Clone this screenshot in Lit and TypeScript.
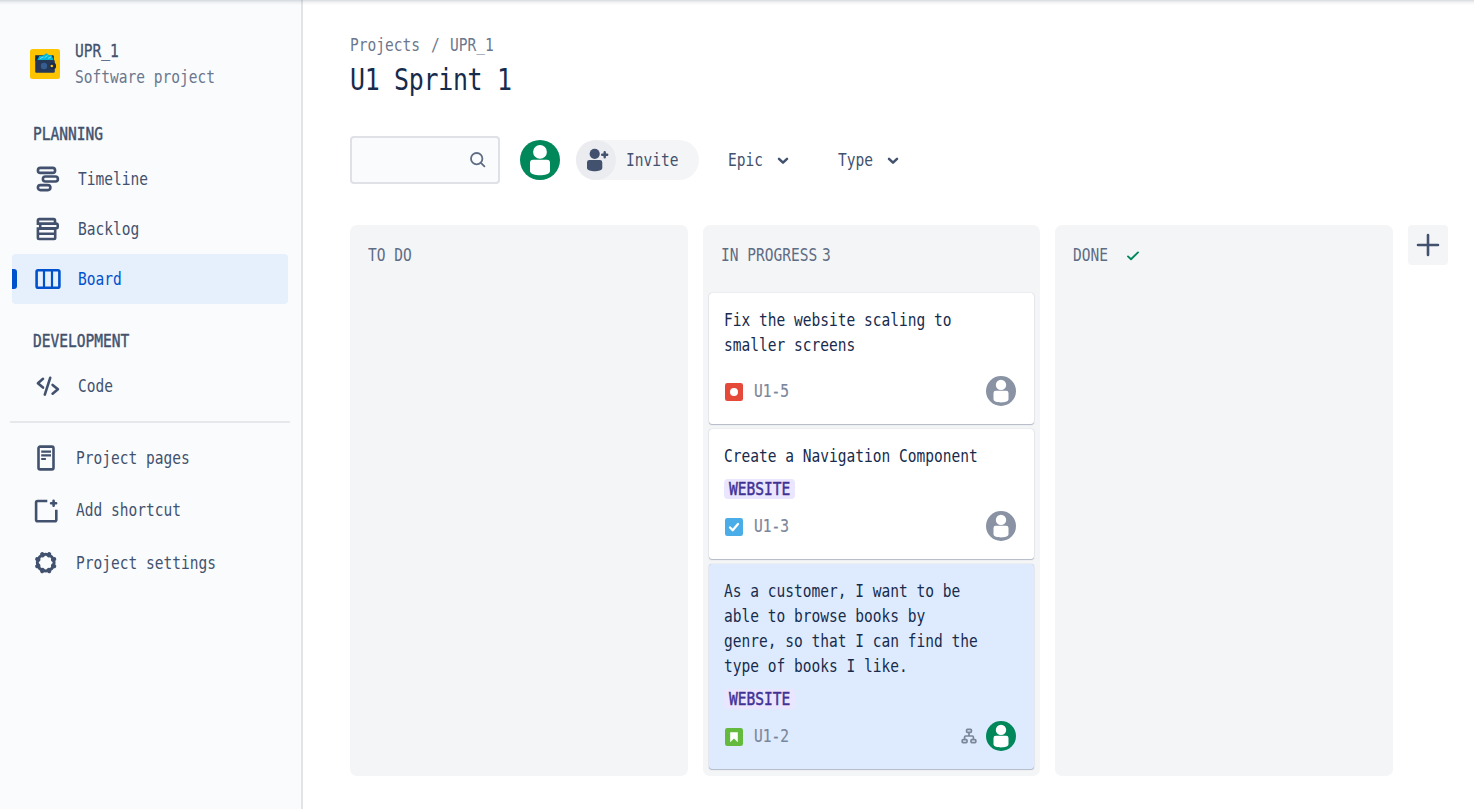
import { LitElement, html, css, svg, nothing } from "lit";
import type { TemplateResult } from "lit";
import { customElement, property } from "lit/decorators.js";

/** Condensed monospace run: DejaVu Sans Mono narrowed to half an em per character. */
@customElement("mono-text")
class MonoText extends LitElement {
  @property() text = "";
  static styles = css`
    :host { display: inline-block; flex: none; white-space: pre; font-size: 17.5px; line-height: 25px; }
    .box { height: 1lh; }
    .run { display: inline-block; transform: scaleX(0.8306); transform-origin: 0 0; }
  `;
  render() {
    return html`<div class="box" style="width:${this.text.length * 0.5}em"><span class="run">${this.text}</span></div>`;
  }
}

const t = (text: string, cls = "") => html`<mono-text class=${cls} .text=${text}></mono-text>`;

const gearTeeth = [22.5, 67.5, 112.5, 157.5, 202.5, 247.5, 292.5, 337.5];

const icons: Record<string, TemplateResult> = {
  timeline: svg`<rect x="4.9" y="3.9" width="17.2" height="5" rx="2.5"/><rect x="9.9" y="12.5" width="15" height="5" rx="2.5"/><rect x="4.9" y="21.1" width="12.5" height="5" rx="2.5"/>`,
  backlog: svg`<path d="M22 9.6V6.4a1.3 1.3 0 0 0-1.3-1.3H6.2A1.3 1.3 0 0 0 4.9 6.4v3.2h18.6a1.2 1.2 0 0 1 1.2 1.2v2.3a1.2 1.2 0 0 1-1.2 1.2H7.2V9.8M4.9 14.6h17.3v9.2a1.2 1.2 0 0 1-1.2 1.2H6.1a1.2 1.2 0 0 1-1.2-1.2zM5 19.8h17"/>`,
  board: svg`<rect x="3.6" y="6.3" width="22.8" height="17.4" rx="1.5"/><path d="M11 6v18M19 6v18" stroke-width="2.2"/>`,
  code: svg`<path d="M10 7.8L4.9 12.2L10 16.6M19.6 13.9L24.9 18.3L19.6 22.7M17.2 6.8L11.8 23.6" stroke-linecap="round" stroke-linejoin="round"/>`,
  pages: svg`<rect x="7.5" y="3.6" width="15" height="22.8" rx="1.6"/><path d="M10.2 8.7h9.8M10.2 12.3h9.8M10.2 16h4.7" stroke-width="2.2"/>`,
  add: svg`<path d="M16.3 5H6.6A1.5 1.5 0 0 0 5.1 6.5V23.7a1.5 1.5 0 0 0 1.5 1.5H23.8a1.5 1.5 0 0 0 1.5-1.5V13.8"/><path d="M22.6 4.8v5M20.1 7.3h5" stroke-width="2.6" stroke-linecap="round"/>`,
  gear: svg`<circle cx="14.7" cy="14.7" r="8.4" stroke-width="3"/>${gearTeeth.map(
    (a) => svg`<path d="M14.7 5.4v1.5" stroke-width="4" stroke-linecap="round" transform="rotate(${a} 14.7 14.7)"/>`
  )}`,
};

const icon = (name: string) =>
  html`<svg class="icon" width="30" height="30" viewBox="0 0 30 30" fill="none" stroke="currentColor" stroke-width="2.6">${icons[name]}</svg>`;

const avatar = (size: number, color: string) => html`<svg class="avatar" width=${size} height=${size} viewBox="0 0 40 40">
  <circle cx="20" cy="20" r="20" fill=${color} />
  <circle cx="20" cy="11.9" r="6.9" fill="#fff" />
  <path d="M10 22.8a3.1 3.1 0 0 1 3.1-3.1h13.8a3.1 3.1 0 0 1 3.1 3.1V31c0 3-5.5 4.2-10 4.2S10 34 10 31z" fill="#fff" />
</svg>`;

const chevron = html`<svg width="20" height="20" viewBox="0 0 20 20" fill="none" stroke="#42526e" stroke-width="2.5" stroke-linecap="round" stroke-linejoin="round"><path d="M6 8.8L10 12.6L14 8.8" /></svg>`;

const GREEN = "#00875a";
const GREY = "#8993a4";

interface Issue { summary: string; key: string; kind: "bug" | "task" | "story"; epic?: string; selected?: boolean; }

const issues: Issue[] = [
  { summary: "Fix the website scaling to smaller screens", key: "U1-5", kind: "bug" },
  { summary: "Create a Navigation Component", key: "U1-3", kind: "task", epic: "WEBSITE" },
  { summary: "As a customer, I want to be able to browse books by genre, so that I can find the type of books I like.", key: "U1-2", kind: "story", epic: "WEBSITE", selected: true },
];

const kinds = {
  bug: svg`<rect width="18" height="18" rx="2.3" fill="#e5493a"/><circle cx="9" cy="9" r="4" fill="#fff"/>`,
  task: svg`<rect width="18" height="18" rx="2.3" fill="#4bade8"/><path d="M5 9.5L7.7 12.2L13 6" fill="none" stroke="#fff" stroke-width="2.3" stroke-linecap="round" stroke-linejoin="round"/>`,
  story: svg`<rect width="18" height="18" rx="2.3" fill="#63ba3c"/><path d="M5.2 4.3h7.6v9.9L9 10.5L5.2 14.2z" fill="#fff"/>`,
};

@customElement("app-root")
class AppRoot extends LitElement {
  static styles = css`
    :host { display: block; font-family: "DejaVu Sans Mono", "Liberation Mono", monospace; font-size: 17.5px; color: #42526e; }
    * { box-sizing: border-box; }
    svg { display: block; flex: none; }
    .page { position: relative; display: flex; height: 809px; overflow: hidden; background: #fff; }
    .topshade { position: absolute; left: 0; right: 0; top: 0; height: 5px; background: linear-gradient(rgba(9, 30, 66, 0.16), rgba(9, 30, 66, 0.05) 50%, rgba(9, 30, 66, 0)); }
    .side { flex: none; width: 303px; border-right: 2px solid #e3e4e6; background: #fafbfd; padding-top: 38px; }
    .project { display: flex; align-items: center; gap: 15px; height: 52px; padding-left: 30px; }
    .names { display: flex; flex-direction: column; gap: 1px; padding-top: 1px; }
    .medium { -webkit-text-stroke: 0.3px currentColor; }
    .semi { -webkit-text-stroke: 0.45px currentColor; }
    .muted { color: #6b778c; }
    .heading { display: flex; padding: 0 0 0 33.4px; margin-top: 31.5px; height: 32.5px; }
    .heading.dev { margin-top: 24.5px; }
    .nav { position: relative; display: flex; align-items: center; gap: 15px; height: 50px; margin: 0 13px 0 12px; padding-left: 21px; border-radius: 4px; }
    .nav.on { background: #e6effc; color: #0052cc; }
    .nav.on::before { content: ""; position: absolute; left: 0; top: 15px; width: 5px; height: 20px; background: #0052cc; border-radius: 0 3px 3px 0; }
    .rule { height: 2px; margin: 10px 11px 9px 10px; background: #e6e8ec; }
    .link { display: flex; align-items: center; gap: 15px; height: 52.5px; padding-left: 31px; }
    .main { flex: 1; padding: 33px 0 0 47px; }
    .crumbs { display: flex; gap: 10.5px; height: 25px; color: #6b778c; }
    .title { display: block; font-size: 30px; line-height: 35px; letter-spacing: -0.36px; margin-top: 4px; color: #172b4d; }
    .tools { display: flex; align-items: center; margin-top: 39px; height: 48px; }
    .search { display: flex; align-items: center; justify-content: flex-end; width: 150px; height: 48px; padding-right: 10px; border: 2px solid #dfe1e6; border-radius: 4px; background: #fafbfc; margin-right: 20px; }
    .invite { display: flex; align-items: center; gap: 10px; width: 123px; height: 40px; margin: 0 28.5px 0 16px; border-radius: 20px; background: #f4f5f7; }
    .disc { display: block; border-radius: 50%; background: #ebecf0; }
    .filter { display: flex; align-items: center; gap: 10.5px; width: 110.3px; }
    .board { display: flex; gap: 15px; margin-top: 41px; }
    .col { width: 337.5px; height: 551px; border-radius: 7px; background: #f4f5f7; padding: 0 6px; }
    .col-head { display: flex; align-items: center; height: 60px; margin-bottom: 8px; padding-left: 12.3px; color: #5e6c84; }
    .count { margin-left: 5px; }
    .done { margin-left: 16px; }
    .cards { display: flex; flex-direction: column; gap: 5px; }
    .card { padding: 15px 18.5px 18px 15px; border-radius: 3px; background: #fff; box-shadow: 0 1px 1px rgba(9, 30, 66, 0.25), 0 0 1px rgba(9, 30, 66, 0.31); }
    .card.sel { margin-top: -0.3px; background: #deebff; }
    .summary { width: 260px; line-height: 25px; color: #172b4d; }
    .narrow { width: 313px; transform: scaleX(0.8306); transform-origin: 0 0; }
    .tag { display: flex; align-items: flex-start; width: 71px; height: 20px; margin-top: 10px; padding-left: 5px; border-radius: 4px; background: #eae6ff; color: #403294; }
    .sel .tag { margin-top: 10.3px; }
    .tag mono-text { margin-top: -2px; }
    .meta { display: flex; align-items: center; height: 30px; margin-top: 12px; }
    .plain .meta { margin-top: 18px; }
    .kind { margin: 1px 11px 0 1px; }
    .key { flex: 1; color: #7a869a; -webkit-text-stroke: 0.2px currentColor; }
    .tree { margin-right: 9px; }
    .plus { display: grid; place-items: center; width: 40px; height: 40px; border-radius: 4px; background: #f4f5f7; }
  `;

  private navItem(name: string, label: string, on = false) {
    return html`<div class="nav ${on ? "on" : ""}">${icon(name)}${t(label)}</div>`;
  }

  private link(name: string, label: string) {
    return html`<div class="link">${icon(name)}${t(label)}</div>`;
  }

  private card(i: Issue) {
    return html`<div class="card ${i.selected ? "sel" : ""} ${i.epic ? "" : "plain"}">
      <div class="summary"><div class="narrow">${i.summary}</div></div>
      ${i.epic ? html`<div class="tag">${t(i.epic, "semi")}</div>` : nothing}
      <div class="meta">
        <svg class="kind" width="18" height="18" viewBox="0 0 18 18">${kinds[i.kind]}</svg>
        ${t(i.key, "key")}
        ${i.selected
          ? html`<svg class="tree" width="16" height="16" viewBox="0 0 16 16" fill="none" stroke="#7a869a" stroke-width="1.7"><rect x="5.6" y="1.3" width="4.8" height="3" rx=".8"/><rect x="1.2" y="11.6" width="4.8" height="3" rx=".8"/><rect x="10" y="11.6" width="4.8" height="3" rx=".8"/><path d="M8 4.5v3.4M3.6 11.4V9a1 1 0 0 1 1-1h6.8a1 1 0 0 1 1 1v2.4"/></svg>`
          : nothing}
        ${avatar(30, i.selected ? GREEN : GREY)}
      </div>
    </div>`;
  }

  render() {
    return html`<div class="page">
      <nav class="side">
        <div class="project">
          <svg width="30" height="30" viewBox="0 0 30 30">
            <rect width="30" height="30" rx="2.5" fill="#ffc400" />
            <path d="M5.2 6.2h17.6a1 1 0 0 1 1 1V12H5.2z" fill="#172b4d" />
            <path d="M7.2 11.2L9.4 7L13 6.6L16.5 4.3L18.8 6L21.8 6.2L23.4 11.2z" fill="#00b8d9" />
            <path d="M10 9.6L13.5 8M14.5 8.6L17.5 6.6M18 9.4L21 8" stroke="#79e2f2" stroke-width=".9" />
            <path d="M5.2 8C5.4 10.2 6.5 11 8 11H23.6a1.2 1.2 0 0 1 1.2 1.2V22.6a1.2 1.2 0 0 1-1.2 1.2H6.4a1.2 1.2 0 0 1-1.2-1.2z" fill="#253858" />
            <rect x="19.8" y="13.8" width="6.2" height="6.2" rx="2.6" fill="#172b4d" />
            <circle cx="14" cy="17" r="3.2" fill="#355d8f" />
            <circle cx="21.8" cy="17" r="1.3" fill="#ffc400" />
          </svg>
          <div class="names">${t("UPR_1", "medium")}${t("Software project", "muted")}</div>
        </div>
        <div class="heading">${t("PLANNING", "semi")}</div>
        ${this.navItem("timeline", "Timeline")}${this.navItem("backlog", "Backlog")}${this.navItem("board", "Board", true)}
        <div class="heading dev">${t("DEVELOPMENT", "semi")}</div>
        ${this.navItem("code", "Code")}
        <div class="rule"></div>
        ${this.link("pages", "Project pages")}${this.link("add", "Add shortcut")}${this.link("gear", "Project settings")}
      </nav>
      <main class="main">
        <div class="crumbs">${t("Projects")}${t("/")}${t("UPR_1")}</div>
        ${t("U1 Sprint 1", "title")}
        <div class="tools">
          <div class="search">
            <svg width="20" height="20" viewBox="0 0 20 20" fill="none" stroke="#5e6c84" stroke-width="1.8" stroke-linecap="round"><circle cx="8.7" cy="8.7" r="5.7" /><path d="M12.9 12.9L16.4 16.4" /></svg>
          </div>
          ${avatar(40, GREEN)}
          <div class="invite">
            <svg class="disc" width="40" height="40" viewBox="0 0 40 40" fill="#42526e">
              <circle cx="18.7" cy="13.8" r="5.1" />
              <path d="M11 22.5a2.4 2.4 0 0 1 2.4-2.4h10.5a2.4 2.4 0 0 1 2.4 2.4V28c0 2.3-4 3.2-7.6 3.2S11 30.3 11 28z" />
              <path d="M28.7 12.3v5M26.2 14.8h5" stroke="#42526e" stroke-width="2.4" stroke-linecap="round" />
            </svg>
            ${t("Invite")}
          </div>
          <div class="filter">${t("Epic")}${chevron}</div>
          <div class="filter">${t("Type")}${chevron}</div>
        </div>
        <div class="board">
          <section class="col"><div class="col-head">${t("TO DO")}</div></section>
          <section class="col">
            <div class="col-head">${t("IN PROGRESS")}${t("3", "count")}</div>
            <div class="cards">${issues.map((i) => this.card(i))}</div>
          </section>
          <section class="col">
            <div class="col-head">
              ${t("DONE")}
              <svg class="done" width="18" height="18" viewBox="0 0 18 18" fill="none" stroke="#00875a" stroke-width="1.9" stroke-linecap="round" stroke-linejoin="round"><path d="M4 10.4L7 13.2L14 6.4" /></svg>
            </div>
          </section>
          <div class="plus">
            <svg width="24" height="24" viewBox="0 0 24 24" fill="none" stroke="#42526e" stroke-width="2.6" stroke-linecap="round"><path d="M12 2v20M2 12h20" /></svg>
          </div>
        </div>
      </main>
      <div class="topshade"></div>
    </div>`;
  }
}
